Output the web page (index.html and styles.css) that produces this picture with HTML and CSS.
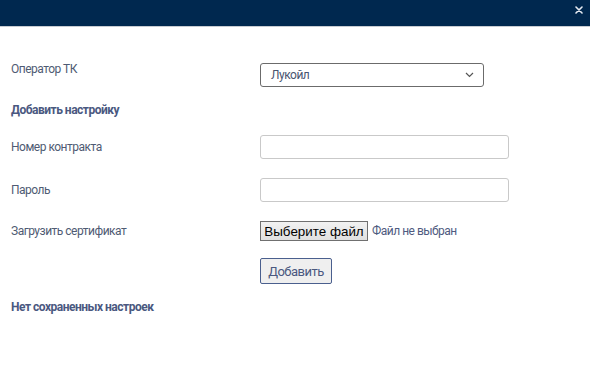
FILE: index.html
```html
<!DOCTYPE html>
<html lang="ru">
<head>
    <meta charset="UTF-8">
    <title>Настройки</title>
    <link rel="stylesheet" href="styles.css">
</head>
<body>

<div class="modal-header">
    <button class="close-btn" type="button">
        <svg width="8" height="8" viewBox="0 0 8 8">
            <path d="M1 1 L7 7 M7 1 L1 7" stroke="#e6ebf2" stroke-width="1.6" stroke-linecap="round"/>
        </svg>
    </button>
</div>

<div class="modal-body">
    <div class="form-row row-top">
        <div class="form-label">Оператор ТК</div>
        <div class="select-box">
            <span>Лукойл</span>
            <svg width="9" height="6" viewBox="0 0 9 6">
                <path d="M1 1 L4.5 4.5 L8 1" fill="none" stroke="#555" stroke-width="1.2"/>
            </svg>
        </div>
    </div>

    <div class="section-title title-add">Добавить настройку</div>

    <div class="form-row row-contract">
        <div class="form-label">Номер контракта</div>
        <input class="text-input" type="text">
    </div>

    <div class="form-row row-field">
        <div class="form-label">Пароль</div>
        <input class="text-input" type="password">
    </div>

    <div class="form-row row-field">
        <div class="form-label">Загрузить сертификат</div>
        <div class="file-field">
            <button class="file-btn" type="button">Выберите файл</button>
            <span class="file-name">Файл не выбран</span>
        </div>
    </div>

    <div class="form-actions">
        <button class="add-btn" type="button">Добавить</button>
    </div>

    <div class="section-title title-empty">Нет сохраненных настроек</div>
</div>

</body>
</html>
```

FILE: styles.css
```css
* {
    box-sizing: border-box;
}

html, body {
    margin: 0;
    height: 100%;
    background-color: #fff;
    font-family: Roboto, "Liberation Sans", sans-serif;
    font-size: 12px;
    letter-spacing: -0.5px;
    color: #4f5b73;
}

.modal-header {
    height: 27px;
    background-color: #00284f;
    border-bottom: 1px solid #c8ccd2;
    display: flex;
    justify-content: flex-end;
    align-items: flex-start;
}

.close-btn {
    background: none;
    border: none;
    padding: 0;
    margin: 6px 7px 0 0;
    width: 8px;
    height: 8px;
    display: flex;
}

.modal-body {
    padding: 36px 11px 0 11px;
}

.form-row {
    display: flex;
    align-items: center;
}

.row-top {
    align-items: flex-start;
}

.row-top .form-label {
    margin-top: -1px;
}

.row-contract {
    margin-top: 17px;
}

.row-field {
    margin-top: 19px;
}

.form-label {
    width: 249px;
    flex-shrink: 0;
    line-height: 14px;
}

.select-box {
    width: 224px;
    height: 24px;
    border: 1px solid #6b6b6b;
    border-radius: 3px;
    display: flex;
    align-items: center;
    justify-content: space-between;
    padding: 0 9px 0 10px;
    color: #4a5570;
}

.text-input {
    width: 249px;
    height: 24px;
    border: 1px solid #c9c9c9;
    border-radius: 3px;
    margin: 0;
    outline: none;
}

.file-field {
    display: flex;
    align-items: center;
}

.file-btn {
    height: 20px;
    width: 108px;
    padding: 0;
    margin: 0;
    font-family: "Liberation Sans", Arial, sans-serif;
    font-size: 13.4px;
    letter-spacing: 0;
    color: #000;
    background: linear-gradient(#f2f2f2, #e0e0e0);
    border: 1px solid #707070;
    border-radius: 0;
}

.file-name {
    margin-left: 4px;
    color: #4f5b80;
}

.section-title {
    font-weight: bold;
    line-height: 16px;
    color: #4a5880;
}

.title-add {
    margin-top: 15px;
}

.title-empty {
    margin-top: 15px;
}

.form-actions {
    margin-top: 17px;
    padding-left: 249px;
}

.add-btn {
    width: 72px;
    height: 26px;
    padding: 0;
    font-family: Roboto, "Liberation Sans", sans-serif;
    font-size: 13px;
    letter-spacing: -0.5px;
    color: #4a5880;
    background-color: #efefef;
    border: 1px solid #4a5f8e;
    border-radius: 2px;
}
```
